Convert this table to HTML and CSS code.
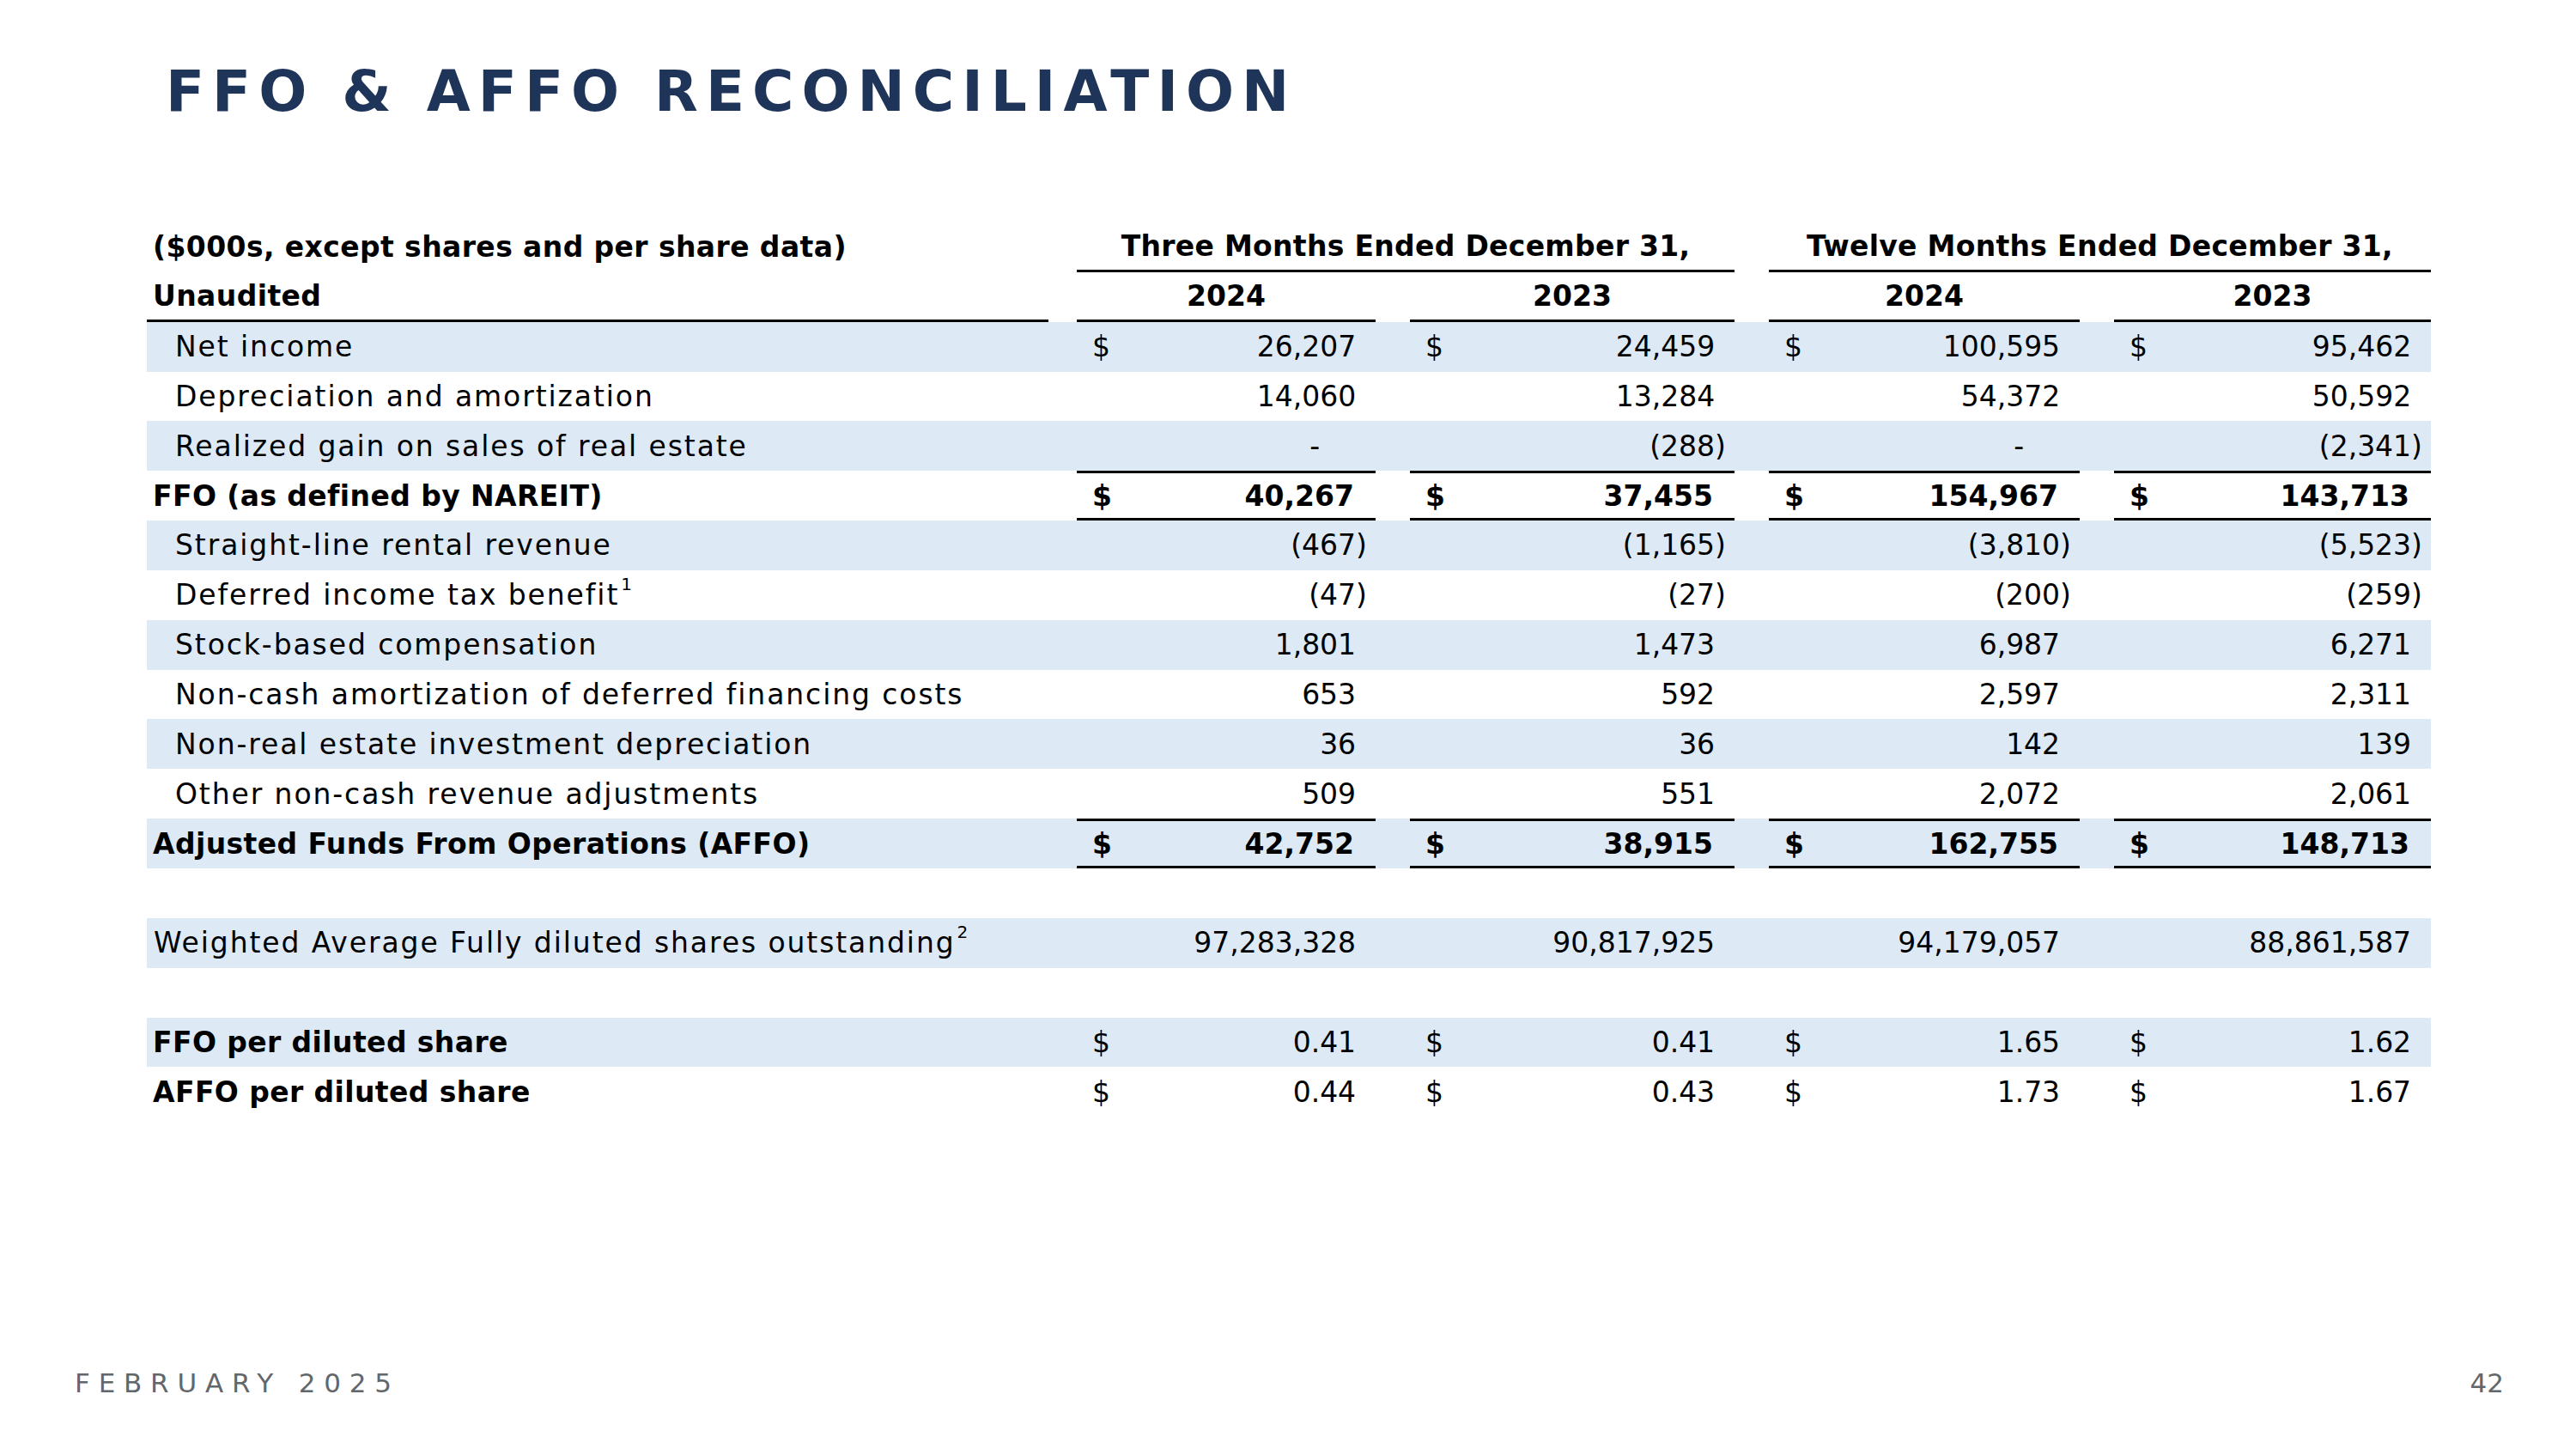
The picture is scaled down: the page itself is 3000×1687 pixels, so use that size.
FILE: index.html
```html
<!DOCTYPE html>
<html lang="en">
<head>
<meta charset="utf-8">
<title>FFO &amp; AFFO Reconciliation</title>
<link rel="stylesheet" href="styles.css">
</head>
<body>
<div class="slide">
  <h1 class="title">FFO &amp; AFFO RECONCILIATION</h1>

  <div class="fin">
    <div class="row">
      <div class="lbl b"><span>($000s, except shares and per share data)</span></div>
      <div class="grp g1">Three Months Ended December 31,</div>
      <div class="grp g2">Twelve Months Ended December 31,</div>
    </div>
    <div class="row">
      <div class="lbl b rule"><span>Unaudited</span></div>
      <div class="yr c1">2024</div>
      <div class="yr c2">2023</div>
      <div class="yr c3">2024</div>
      <div class="yr c4">2023</div>
    </div>

    <div class="row band">
      <div class="lbl"><span>Net income</span></div>
      <div class="cell c1"><span class="cur">$</span><span class="n">26,207</span></div>
      <div class="cell c2"><span class="cur">$</span><span class="n">24,459</span></div>
      <div class="cell c3"><span class="cur">$</span><span class="n">100,595</span></div>
      <div class="cell c4"><span class="cur">$</span><span class="n">95,462</span></div>
    </div>
    <div class="row">
      <div class="lbl"><span>Depreciation and amortization</span></div>
      <div class="cell c1"><span class="n">14,060</span></div>
      <div class="cell c2"><span class="n">13,284</span></div>
      <div class="cell c3"><span class="n">54,372</span></div>
      <div class="cell c4"><span class="n">50,592</span></div>
    </div>
    <div class="row band">
      <div class="lbl"><span>Realized gain on sales of real estate</span></div>
      <div class="cell c1"><span class="n dash">-</span></div>
      <div class="cell c2"><span class="n neg">(288)</span></div>
      <div class="cell c3"><span class="n dash">-</span></div>
      <div class="cell c4"><span class="n neg">(2,341)</span></div>
    </div>
    <div class="row tot">
      <div class="lbl b"><span>FFO (as defined by NAREIT)</span></div>
      <div class="cell c1"><span class="cur">$</span><span class="n">40,267</span></div>
      <div class="cell c2"><span class="cur">$</span><span class="n">37,455</span></div>
      <div class="cell c3"><span class="cur">$</span><span class="n">154,967</span></div>
      <div class="cell c4"><span class="cur">$</span><span class="n">143,713</span></div>
    </div>
    <div class="row band">
      <div class="lbl"><span>Straight-line rental revenue</span></div>
      <div class="cell c1"><span class="n neg">(467)</span></div>
      <div class="cell c2"><span class="n neg">(1,165)</span></div>
      <div class="cell c3"><span class="n neg">(3,810)</span></div>
      <div class="cell c4"><span class="n neg">(5,523)</span></div>
    </div>
    <div class="row">
      <div class="lbl"><span>Deferred income tax benefit<sup>1</sup></span></div>
      <div class="cell c1"><span class="n neg">(47)</span></div>
      <div class="cell c2"><span class="n neg">(27)</span></div>
      <div class="cell c3"><span class="n neg">(200)</span></div>
      <div class="cell c4"><span class="n neg">(259)</span></div>
    </div>
    <div class="row band">
      <div class="lbl"><span>Stock-based compensation</span></div>
      <div class="cell c1"><span class="n">1,801</span></div>
      <div class="cell c2"><span class="n">1,473</span></div>
      <div class="cell c3"><span class="n">6,987</span></div>
      <div class="cell c4"><span class="n">6,271</span></div>
    </div>
    <div class="row">
      <div class="lbl"><span>Non-cash amortization of deferred financing costs</span></div>
      <div class="cell c1"><span class="n">653</span></div>
      <div class="cell c2"><span class="n">592</span></div>
      <div class="cell c3"><span class="n">2,597</span></div>
      <div class="cell c4"><span class="n">2,311</span></div>
    </div>
    <div class="row band">
      <div class="lbl"><span>Non-real estate investment depreciation</span></div>
      <div class="cell c1"><span class="n">36</span></div>
      <div class="cell c2"><span class="n">36</span></div>
      <div class="cell c3"><span class="n">142</span></div>
      <div class="cell c4"><span class="n">139</span></div>
    </div>
    <div class="row">
      <div class="lbl"><span>Other non-cash revenue adjustments</span></div>
      <div class="cell c1"><span class="n">509</span></div>
      <div class="cell c2"><span class="n">551</span></div>
      <div class="cell c3"><span class="n">2,072</span></div>
      <div class="cell c4"><span class="n">2,061</span></div>
    </div>
    <div class="row band tot">
      <div class="lbl b"><span>Adjusted Funds From Operations (AFFO)</span></div>
      <div class="cell c1"><span class="cur">$</span><span class="n">42,752</span></div>
      <div class="cell c2"><span class="cur">$</span><span class="n">38,915</span></div>
      <div class="cell c3"><span class="cur">$</span><span class="n">162,755</span></div>
      <div class="cell c4"><span class="cur">$</span><span class="n">148,713</span></div>
    </div>
    <div class="row"></div>
    <div class="row band">
      <div class="lbl flat"><span>Weighted Average Fully diluted shares outstanding<sup>2</sup></span></div>
      <div class="cell c1"><span class="n">97,283,328</span></div>
      <div class="cell c2"><span class="n">90,817,925</span></div>
      <div class="cell c3"><span class="n">94,179,057</span></div>
      <div class="cell c4"><span class="n">88,861,587</span></div>
    </div>
    <div class="row"></div>
    <div class="row band">
      <div class="lbl b"><span>FFO per diluted share</span></div>
      <div class="cell c1"><span class="cur">$</span><span class="n">0.41</span></div>
      <div class="cell c2"><span class="cur">$</span><span class="n">0.41</span></div>
      <div class="cell c3"><span class="cur">$</span><span class="n">1.65</span></div>
      <div class="cell c4"><span class="cur">$</span><span class="n">1.62</span></div>
    </div>
    <div class="row">
      <div class="lbl b"><span>AFFO per diluted share</span></div>
      <div class="cell c1"><span class="cur">$</span><span class="n">0.44</span></div>
      <div class="cell c2"><span class="cur">$</span><span class="n">0.43</span></div>
      <div class="cell c3"><span class="cur">$</span><span class="n">1.73</span></div>
      <div class="cell c4"><span class="cur">$</span><span class="n">1.67</span></div>
    </div>
  </div>

  <footer class="foot">
    <span class="date">FEBRUARY 2025</span>
    <span class="page">42</span>
  </footer>
</div>
</body>
</html>
```

FILE: styles.css
```css
* {
  box-sizing: border-box;
}

html, body {
  margin: 0;
  padding: 0;
  background: #ffffff;
}

body {
  font-family: "DejaVu Sans", "Liberation Sans", sans-serif;
  color: #000000;
}

.slide {
  width: 3000px;
  height: 1687px;
  display: flex;
  flex-direction: column;
  overflow: hidden;
}

.title {
  margin: 74px 0 0 0;
  padding-left: 193px;
  font-size: 66px;
  line-height: 66px;
  font-weight: 700;
  letter-spacing: 9px;
  color: #1f3459;
  white-space: nowrap;
}

.fin {
  margin: 119px 0 0 171px;
  width: 2660px;
  font-size: 33px;
}

.row {
  display: grid;
  grid-template-columns: 1050px 33px 348px 40px 378px 40px 362px 40px 369px;
  height: 57.85px;
}

.band {
  background: #ddeaf6;
}

.lbl {
  grid-column: 1;
  display: flex;
  align-items: center;
  white-space: nowrap;
  letter-spacing: 1.9px;
  padding-left: 33px;
}

.lbl.b {
  font-weight: 700;
  letter-spacing: 0.4px;
  padding-left: 7px;
}

.lbl.flat {
  padding-left: 8px;
}

.lbl sup {
  font-size: 20px;
  line-height: 0;
  vertical-align: 17px;
  letter-spacing: 0;
  margin-left: 2px;
}

.rule {
  border-bottom: 3px solid #000000;
}

.grp {
  display: flex;
  align-items: center;
  justify-content: center;
  font-weight: 700;
  letter-spacing: 0.3px;
  white-space: nowrap;
  border-bottom: 3px solid #000000;
}

.g1 { grid-column: 3 / 6; }
.g2 { grid-column: 7 / 10; }

.c1 { grid-column: 3; }
.c2 { grid-column: 5; }
.c3 { grid-column: 7; }
.c4 { grid-column: 9; }

.yr {
  display: flex;
  align-items: center;
  justify-content: center;
  font-weight: 700;
  border-bottom: 3px solid #000000;
}

.cell {
  display: flex;
  align-items: center;
  padding: 0 10px 0 18px;
  white-space: nowrap;
}

.n {
  margin-left: auto;
}

.n::after {
  content: ")";
  visibility: hidden;
}

.n.neg::after {
  content: none;
}

.n.dash::after {
  content: "00)";
}

.tot .cell {
  border-top: 3px solid #000000;
  border-bottom: 3px solid #000000;
  font-weight: 700;
}

.foot {
  margin-top: auto;
  display: flex;
  justify-content: space-between;
  align-items: flex-end;
  padding: 0 84px 61px 87px;
  font-size: 31px;
  line-height: 31px;
  color: #62676c;
}

.date {
  letter-spacing: 9.8px;
}
```
